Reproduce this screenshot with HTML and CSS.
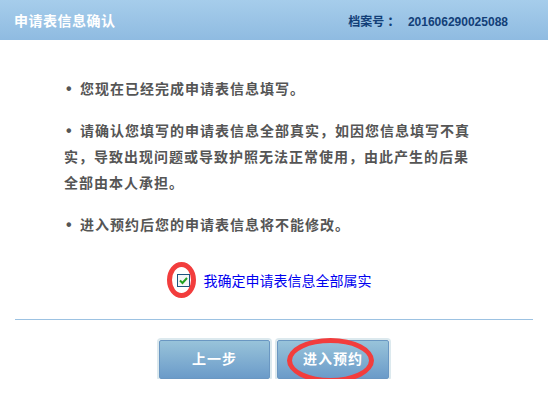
FILE: index.html
```html
<!DOCTYPE html>
<html>
<head>
<title>申请表信息确认</title>
<meta charset="UTF-8">
<link rel="stylesheet" href="styles.css">
</head>
<body>

<!-- 标题栏 -->
<div class="title-bar">
    <span class="title">申请表信息确认</span>
    <span class="file-no">档案号 <b class="colon">：</b> 201606290025088</span>
</div>

<!-- 提示内容 -->
<div class="notice">
    <p><span class="dot">•</span>您现在已经完成申请表信息填写。</p>
    <p><span class="dot">•</span>请确认您填写的申请表信息全部真实，如因您信息填写不真实，导致出现问题或导致护照无法正常使用，由此产生的后果全部由本人承担。</p>
    <p><span class="dot">•</span>进入预约后您的申请表信息将不能修改。</p>
</div>

<!-- 确认勾选 -->
<div class="confirm">
    <span class="check">
        <svg width="13" height="13" viewBox="0 0 13 13">
            <rect x="0.5" y="0.5" width="12" height="12" fill="#f4f6f8" stroke="#1c5380"/>
            <path d="M3 6.5 L5.5 9 L10 4" fill="none" stroke="#21a121" stroke-width="2"/>
        </svg>
        <i class="ring ring-check"></i>
    </span>
    <a class="confirm-text" href="javascript:;">我确定申请表信息全部属实</a>
</div>

<div class="line"></div>

<!-- 按钮 -->
<div class="buttons">
    <a class="btn" href="javascript:;">上一步</a>
    <a class="btn btn-next" href="javascript:;">进入预约<i class="ring ring-btn"></i></a>
</div>

</body>
</html>
```

FILE: styles.css
```css
body {
    margin: 0;
    background: #fff;
    font-family: "Liberation Sans", "Noto Sans CJK SC", sans-serif;
}

/* 标题栏 */
.title-bar {
    height: 40px;
    display: flex;
    align-items: center;
    justify-content: space-between;
    padding: 0 40px 0 14px;
    background: linear-gradient(#a6cdeb, #8fbbe1);
}

.title {
    color: #fff;
    font-size: 14px;
    font-weight: bold;
    letter-spacing: 0.5px;
}

.file-no {
    color: #123f78;
    font-size: 12px;
    font-weight: bold;
}

.file-no .colon {
    margin: 0 5px 0 0;
}

/* 提示内容 */
.notice {
    width: 408px;
    margin: 36px 0 0 64px;
    color: #555;
    font-size: 14px;
    font-weight: bold;
    line-height: 26px;
    letter-spacing: 1px;
}

.notice p {
    margin: 0 0 16px;
}

.notice .dot {
    display: inline-block;
    width: 14px;
    padding-left: 2px;
    font-size: 16px;
    letter-spacing: 0;
    vertical-align: top;
}

/* 确认勾选 */
.confirm {
    display: flex;
    justify-content: center;
    align-items: center;
    height: 26px;
    margin-top: 29px;
    gap: 14px;
}

.check {
    position: relative;
    width: 13px;
    height: 13px;
}

.check svg {
    display: block;
}

.confirm-text {
    color: #0000f0;
    font-size: 14px;
    text-decoration: none;
}

.ring {
    position: absolute;
    border: 5px solid #f23d3d;
    border-radius: 50%;
    box-sizing: border-box;
}

.ring-check {
    left: -10px;
    top: -12px;
    width: 29px;
    height: 36px;
}

.line {
    height: 1px;
    margin: 26px 15px 0;
    background: #9cc2e2;
}

/* 按钮 */
.buttons {
    display: flex;
    justify-content: center;
    gap: 7px;
    margin-top: 20px;
}

.btn {
    position: relative;
    width: 109px;
    height: 37px;
    line-height: 37px;
    text-align: center;
    color: #fff;
    font-size: 14px;
    font-weight: bold;
    letter-spacing: 1px;
    text-decoration: none;
    border: 1px solid #6a97c2;
    border-radius: 2px;
    background: linear-gradient(#98c3da, #6b9bc9);
    box-shadow: 0 0 0 2px #dce9ee;
}

.btn-next {
    width: 110px;
}

.ring-btn {
    left: 9px;
    top: -3px;
    width: 87px;
    height: 45px;
}
```
